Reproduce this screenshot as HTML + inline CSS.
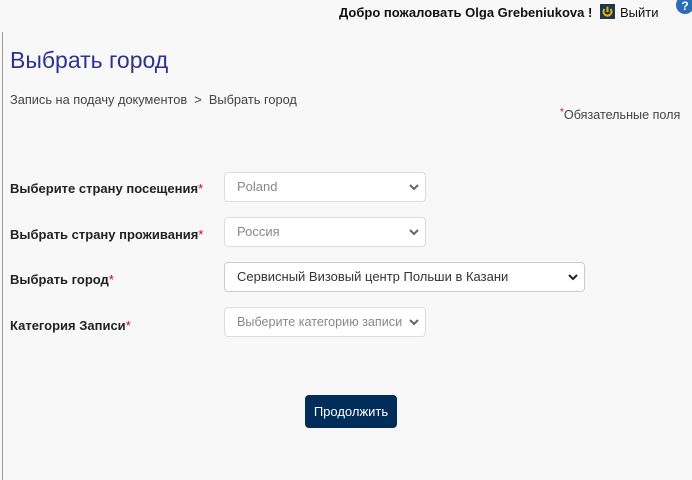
<!DOCTYPE html>
<html><head><meta charset="utf-8"><style>
body{margin:0;width:692px;height:480px;background:#f8f8f8;font-family:"Liberation Sans",Arial,sans-serif;position:relative;overflow:hidden}
.a{position:absolute;white-space:nowrap}
.vl{position:absolute;left:2px;top:32px;width:1px;height:448px;background:#999}
.lbl{font-size:13px;font-weight:bold;color:#222}
.lbl span{color:#d00;font-weight:normal}
.sel{position:absolute;height:28px;border:1px solid #ddd;border-radius:4px;background:#fff;box-sizing:border-box;font-size:13px;color:#888;padding:0 12px;line-height:26px;overflow:hidden}
.sel svg{position:absolute;right:6px;top:11px}
</style></head><body>
<div class="vl"></div>
<div class="a" style="left:339px;top:5px;font-size:13px;font-weight:bold;color:#111">Добро пожаловать Olga Grebeniukova !</div>
<div class="a" style="left:600px;top:4px;width:15px;height:15px;background:#1c3550"><svg width="15" height="15" viewBox="0 0 15 15"><path d="M4.5 5 A4 4 0 1 0 10.5 5" fill="none" stroke="#e5b800" stroke-width="2"/><line x1="7.5" y1="2.5" x2="7.5" y2="8" stroke="#e5b800" stroke-width="2"/></svg></div>
<div class="a" style="left:620px;top:5px;font-size:13px;color:#111">Выйти</div>
<div class="a" style="left:676px;top:-4px;width:18px;height:18px;border-radius:50%;background:#2a6cb5;color:#fff;font-size:12px;font-weight:bold;text-align:center;line-height:20px">?</div>
<div class="a" style="left:10px;top:47px;font-size:23px;color:#2e3192">Выбрать город</div>
<div class="a" style="left:10px;top:92px;font-size:12.8px;color:#444">Запись на подачу документов &nbsp;&gt;&nbsp; Выбрать город</div>
<div class="a" style="left:560px;top:108px;font-size:12.6px;color:#444"><span style="color:#d00;position:relative;top:-4px;font-size:10px">*</span>Обязательные поля</div>
<div class="a lbl" style="left:10px;top:181px">Выберите страну посещения<span>*</span></div>
<div class="a lbl" style="left:10px;top:227px">Выбрать страну проживания<span>*</span></div>
<div class="a lbl" style="left:10px;top:272px">Выбрать город<span>*</span></div>
<div class="a lbl" style="left:10px;top:318px">Категория Записи<span>*</span></div>
<div class="sel" style="left:224px;top:172px;width:202px;height:30px;line-height:28px">Poland<svg width="10" height="7"><path d="M1 1l4 4 4-4" fill="none" stroke="#666" stroke-width="2"/></svg></div>
<div class="sel" style="left:224px;top:217px;width:202px;height:30px;line-height:28px">Россия<svg width="10" height="7"><path d="M1 1l4 4 4-4" fill="none" stroke="#666" stroke-width="2"/></svg></div>
<div class="sel" style="left:224px;top:262px;width:361px;height:30px;line-height:28px;color:#333;border-color:#ccc">Сервисный Визовый центр Польши в Казани<svg width="10" height="7"><path d="M1 1l4 4 4-4" fill="none" stroke="#222" stroke-width="2"/></svg></div>
<div class="sel" style="left:224px;top:307px;width:202px;height:30px;line-height:28px;padding-left:12px;font-size:12.6px">Выберите категорию записи<svg width="10" height="7" style="background:#fff"><path d="M1 1l4 4 4-4" fill="none" stroke="#666" stroke-width="2"/></svg></div>
<div class="a" style="left:305px;top:395px;width:92px;height:33px;background:#002d5a;border-radius:4px;color:#fff;font-size:13px;text-align:center;line-height:33px">Продолжить</div>
</body></html>
